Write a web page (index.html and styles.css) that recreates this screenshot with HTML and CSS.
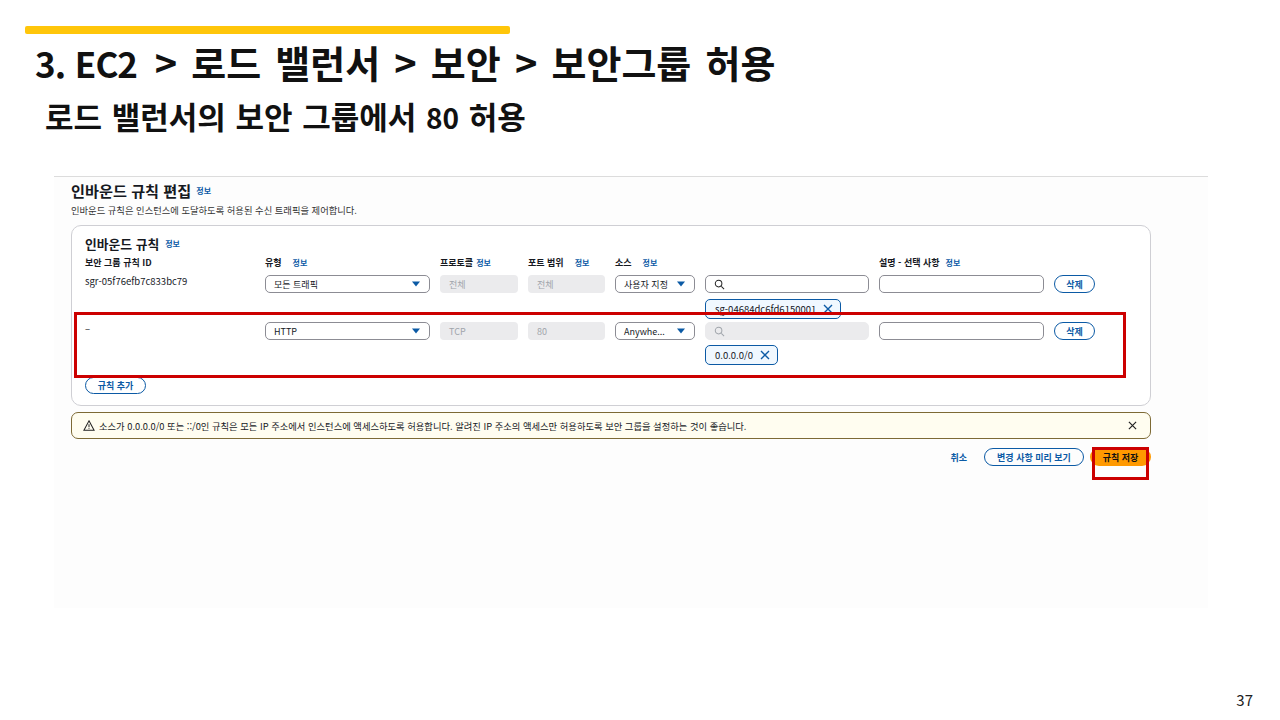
FILE: index.html
```
<!DOCTYPE html>
<html lang="ko">
<head>
<meta charset="utf-8">
<title>보안그룹 허용</title>
<link rel="stylesheet" href="styles.css">
</head>
<body>
<div class="slide">
  <div class="accent"></div>
  <h1 class="title"><span class="lat">3. EC2</span> &gt; 로드 밸런서 &gt; 보안 &gt; 보안그룹 허용</h1>
  <h2 class="subtitle">로드 밸런서의 보안 그룹에서 <span class="lat">80</span> 허용</h2>
  <div class="shot">
    <div class="head"><span class="h-title">인바운드 규칙 편집</span><a class="info">정보</a></div>
    <div class="desc">인바운드 규칙은 인스턴스에 도달하도록 허용된 수신 트래픽을 제어합니다.</div>
    <div class="card">
      <div class="card-title"><span>인바운드 규칙</span><a class="info">정보</a></div>
      <div class="grid labels">
        <div class="lab">보안 그룹 규칙 ID</div>
        <div class="lab">유형<a class="info">정보</a></div>
        <div class="lab tight">프로토콜<a class="info">정보</a></div>
        <div class="lab">포트 범위<a class="info">정보</a></div>
        <div class="lab">소스<a class="info">정보</a></div>
        <div></div>
        <div class="lab mid">설명 - 선택 사항<a class="info">정보</a></div>
        <div></div>
      </div>
      <div class="grid row1">
        <div class="rid">sgr-05f76efb7c833bc79</div>
        <div class="sel">모든 트래픽<svg class="caret" viewBox="0 0 10 6"><path d="M0 0h10L5 6z"/></svg></div>
        <div class="dis">전체</div>
        <div class="dis">전체</div>
        <div class="sel">사용자 지정<svg class="caret" viewBox="0 0 10 6"><path d="M0 0h10L5 6z"/></svg></div>
        <div class="srch"><svg class="mag" viewBox="0 0 12 12"><circle cx="5" cy="5" r="3.6"/><path d="M8 8l3 3"/></svg></div>
        <div class="inp"></div>
        <div class="del">삭제</div>
      </div>
      <div class="grid tokrow">
        <div class="tok-cell"><span class="tok">sg-04684dc6fd6150001<svg class="x" viewBox="0 0 10 10"><path d="M1 1l8 8M9 1l-8 8"/></svg></span></div>
      </div>
      <div class="grid row2">
        <div class="rid">–</div>
        <div class="sel">HTTP<svg class="caret" viewBox="0 0 10 6"><path d="M0 0h10L5 6z"/></svg></div>
        <div class="dis">TCP</div>
        <div class="dis">80</div>
        <div class="sel">Anywhe...<svg class="caret" viewBox="0 0 10 6"><path d="M0 0h10L5 6z"/></svg></div>
        <div class="srch off"><svg class="mag" viewBox="0 0 12 12"><circle cx="5" cy="5" r="3.6"/><path d="M8 8l3 3"/></svg></div>
        <div class="inp"></div>
        <div class="del">삭제</div>
      </div>
      <div class="grid tokrow2">
        <div class="tok-cell"><span class="tok">0.0.0.0/0<svg class="x" viewBox="0 0 10 10"><path d="M1 1l8 8M9 1l-8 8"/></svg></span></div>
      </div>
      <div class="add">규칙 추가</div>
    </div>
    <div class="warn">
      <svg class="tri" viewBox="0 0 14 13"><path d="M7 1l6 11H1z"/><path d="M7 5v3.5M7 9.8v.8"/></svg>
      <span class="warn-text">소스가 0.0.0.0/0 또는 ::/0인 규칙은 모든 IP 주소에서 인스턴스에 액세스하도록 허용합니다. 알려진 IP 주소의 액세스만 허용하도록 보안 그룹을 설정하는 것이 좋습니다.</span>
      <svg class="warn-x" viewBox="0 0 10 10"><path d="M1 1l8 8M9 1l-8 8"/></svg>
    </div>
    <div class="actions">
      <span class="cancel">취소</span>
      <span class="preview">변경 사항 미리 보기</span>
      <span class="save">규칙 저장</span>
    </div>
    <div class="mark mark-row"></div>
    <div class="mark mark-save"></div>
  </div>
  <div class="page">37</div>
</div>
</body>
</html>
```
FILE: styles.css
```
* { box-sizing: border-box; }
html, body { margin: 0; padding: 0; }
body { width: 1280px; height: 720px; overflow: hidden; background: #fff; font-family: "Noto Sans CJK KR", "Noto Sans", sans-serif; }
.slide { position: relative; width: 1280px; height: 720px; padding: 26px 0 0 25px; }
.accent { width: 485px; height: 8px; background: #ffc60a; border-radius: 2px; }
.title { margin: 2px 0 0 10px; font-size: 38px; line-height: 52px; font-weight: 700; color: #111; word-spacing: 3.5px; white-space: nowrap; }
.title .lat { font-size: 35px; letter-spacing: -1px; word-spacing: 1px; margin-right: 3.5px; }
.subtitle { margin: 7px 0 0 20px; font-size: 31px; line-height: 40px; font-weight: 700; color: #111; word-spacing: 1px; white-space: nowrap; }
.subtitle .lat { font-size: 28px; }
.shot { position: relative; width: 1154px; height: 432px; margin: 39px 0 0 29px; padding: 3px 17px 0; background: #fdfdfd; border-top: 1px solid #dcdcdc; color: #16191f; }
.head { display: flex; align-items: center; height: 20px; }
.h-title { font-size: 15.2px; font-weight: 700; }
.info { color: #0b5aa5; font-size: 8px; font-weight: 700; margin-left: 5px; }
.desc { font-size: 9.3px; line-height: 14px; margin-top: 3px; color: #333; white-space: nowrap; }
.card { position: relative; margin-top: 8px; width: 1080px; height: 181px; padding: 7px 13px 0; border: 1px solid #cfcfd4; border-radius: 10px; background: #fff; }
.card-title { display: flex; align-items: center; height: 20px; font-size: 12.8px; font-weight: 700; }
.card-title .info { margin-left: 6px; }
.grid { display: grid; grid-template-columns: 170px 165px 78px 77px 80px 164px 165px 41px; column-gap: 10px; }
.labels { margin-top: 2px; height: 14px; font-size: 9px; font-weight: 700; align-items: center; }
.lab { white-space: nowrap; }
.lab .info { margin-left: 11px; }
.lab.tight .info { margin-left: 3px; }
.lab.mid .info { margin-left: 6px; }
.row1 { margin-top: 6px; height: 18px; }
.row2 { margin-top: 3px; height: 18px; }
.rid { font-size: 9.5px; line-height: 13px; }
.sel, .srch, .inp, .del, .dis, .tok { font-size: 9px; }
.sel { display: flex; align-items: center; justify-content: space-between; padding: 0 9px 0 8px; height: 18px; border: 1px solid #8c8c94; border-radius: 5px; background: #fff; white-space: nowrap; }
.caret { width: 8px; height: 6px; fill: #0b5aa5; flex: none; }
.dis { display: flex; align-items: center; padding-left: 9px; height: 18px; border-radius: 4px; background: #ebebed; color: #a0a5ab; }
.srch { display: flex; align-items: center; padding-left: 8px; height: 18px; border: 1px solid #8c8c94; border-radius: 5px; }
.srch.off { background: #ebebed; border-color: #ebebed; }
.mag { width: 11px; height: 11px; fill: none; stroke: #222; stroke-width: 1.1; }
.off .mag { stroke: #a0a5ab; }
.inp { height: 18px; border: 1px solid #8c8c94; border-radius: 5px; background: #fff; }
.del { display: flex; align-items: center; justify-content: center; height: 18px; border: 1.5px solid #0b5aa5; border-radius: 9px; color: #0b5aa5; font-weight: 700; }
.tokrow { margin-top: 6px; height: 20px; }
.tokrow2 { margin-top: 5px; height: 20px; }
.tok-cell { grid-column: 6; line-height: 0; }
.tok { display: inline-flex; align-items: center; gap: 7px; height: 20px; line-height: 12px; padding: 0 7px 0 9px; border: 1.2px solid #0b5aa5; border-radius: 5px; background: #f0f8ff; font-size: 9.5px; white-space: nowrap; }
.x { width: 10px; height: 10px; fill: none; stroke: #0b5aa5; stroke-width: 1.4; }
.add { display: flex; align-items: center; justify-content: center; width: 61px; height: 17px; margin-top: 12px; border: 1.5px solid #0b5aa5; border-radius: 9px; font-size: 9px; font-weight: 700; color: #0b5aa5; }
.warn { display: flex; align-items: center; gap: 4px; margin-top: 6px; width: 1080px; height: 27px; padding: 0 13px 0 11px; background: #fffdf0; border: 1.2px solid #7d6a35; border-radius: 7px; }
.tri { width: 12px; height: 11px; fill: none; stroke: #222; stroke-width: 1.2; }
.warn-text { flex: 1; font-size: 9.3px; white-space: nowrap; }
.warn-x { width: 9px; height: 9px; fill: none; stroke: #222; stroke-width: 1.3; }
.actions { display: flex; align-items: center; justify-content: flex-end; width: 1080px; height: 18px; margin-top: 9px; font-size: 9px; font-weight: 700; }
.cancel { color: #0b5aa5; margin-right: 17px; }
.preview { display: flex; align-items: center; justify-content: center; width: 100px; height: 18px; margin-right: 6px; border: 1.5px solid #0b5aa5; border-radius: 9px; color: #0b5aa5; }
.save { display: flex; align-items: center; justify-content: center; width: 61px; height: 18px; border-radius: 9px; background: #ff9900; color: #111; }
.mark { position: absolute; border: 3px solid #cc0000; }
.mark-row { left: 20px; top: 135px; width: 1052px; height: 66px; }
.mark-save { left: 1038px; top: 270px; width: 57px; height: 33px; }
.page { position: absolute; right: 27px; top: 690px; font-size: 15px; line-height: 20px; color: #222; }
```
